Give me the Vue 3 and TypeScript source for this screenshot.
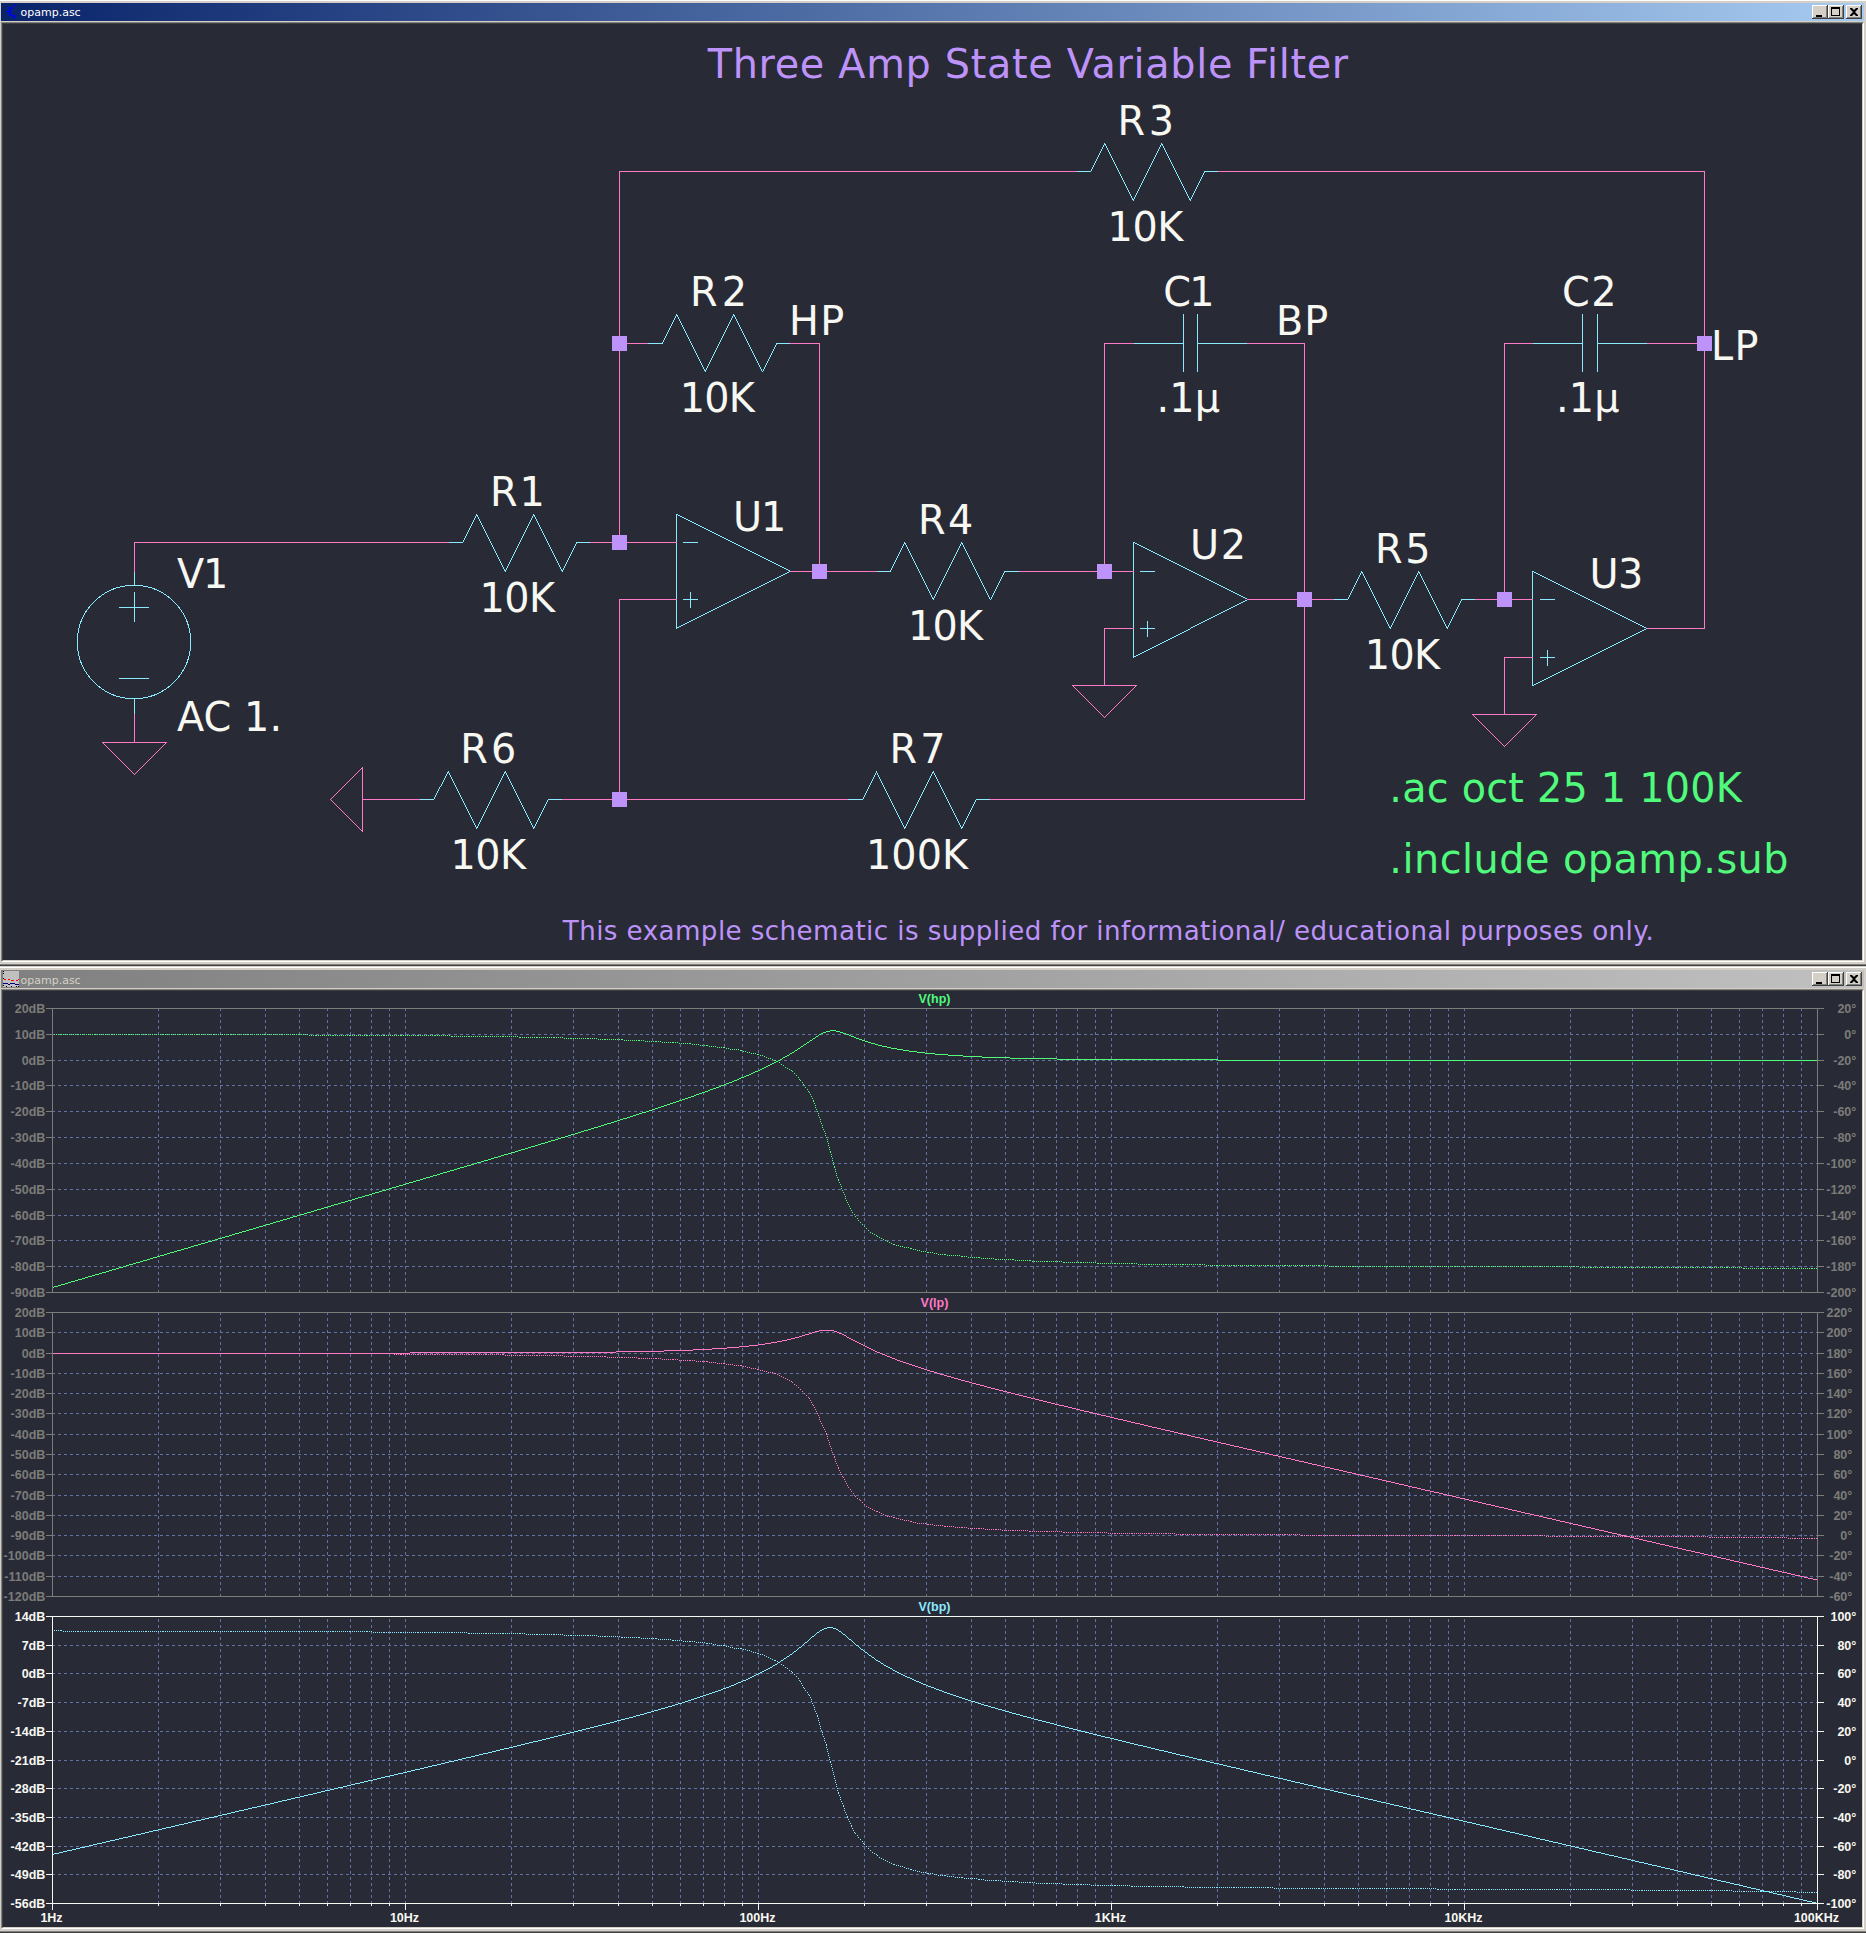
<script setup lang="ts">
type Pt = [number, number]

/* ---------- pixel line helpers ---------- */

// Walks a polyline pixel by pixel and returns a filled path; `on`/`off` give the dash pattern.
function trace(points: Pt[], on = 1, off = 0): string {
  const px: Pt[] = []
  for (let i = 0; i < points.length - 1; i++) {
    let [x, y] = points[i]
    const [x1, y1] = points[i + 1]
    const dx = Math.abs(x1 - x)
    const dy = -Math.abs(y1 - y)
    const sx = x < x1 ? 1 : -1
    const sy = y < y1 ? 1 : -1
    let err = dx + dy
    for (;;) {
      const last = px[px.length - 1]
      if (!last || last[0] !== x || last[1] !== y) px.push([x, y])
      if (x === x1 && y === y1) break
      const e2 = 2 * err
      if (e2 >= dy) { err += dy; x += sx }
      if (e2 <= dx) { err += dx; y += sy }
    }
  }
  let d = ''
  let i = 0
  while (i < px.length) {
    if (off && i % (on + off) >= on) { i++; continue }
    let j = i
    while (
      j + 1 < px.length && px[j + 1][1] === px[i][1] && px[j + 1][0] === px[j][0] + 1 &&
      (!off || (j + 1) % (on + off) < on) && (!off || (j + 1) % (on + off) !== 0)
    ) j++
    const w = j - i + 1
    d += `M${px[i][0]} ${px[i][1]}h${w}v1h-${w}z`
    i = j + 1
  }
  return d
}

/* ---------- schematic ---------- */

const gx = (n: number): number => Math.floor(619.38 + 28.55 * n)
const gy = (m: number): number => Math.floor(542.85 + 28.54 * m)
const grid = (pts: Pt[]): string => trace(pts.map(([n, m]) => [gx(n), gy(m)] as Pt))

const wires: Pt[][] = [
  [[0, 0], [0, -13], [16, -13]],
  [[21, -13], [38, -13], [38, 3], [36, 3]],
  [[0, -7], [1, -7]],
  [[6, -7], [7, -7], [7, 1]],
  [[6, 1], [9, 1]],
  [[14, 1], [18, 1]],
  [[17, 1], [17, -7], [18, -7]],
  [[22, -7], [24, -7], [24, 9]],
  [[22, 2], [25, 2]],
  [[30, 2], [32, 2]],
  [[31, 2], [31, -7], [32, -7]],
  [[36, -7], [38, -7]],
  [[32, 4], [31, 4], [31, 6]],
  [[18, 3], [17, 3], [17, 5]],
  [[2, 2], [0, 2], [0, 9]],
  [[-17, 1], [-17, 0], [-6, 0]],
  [[-1, 0], [2, 0]],
  [[-17, 6], [-17, 7]],
  [[-9, 9], [-7, 9]],
  [[-2, 9], [8, 9]],
  [[13, 9], [24, 9]],
]
const wirePath = wires.map(grid).join('')

const groundPath = ([[-17, 7], [17, 5], [31, 6]] as Pt[])
  .map(([n, m]) => {
    const x = gx(n)
    const y = gy(m)
    return trace([[x, y + 32], [x - 32, y], [x + 32, y], [x, y + 32]])
  })
  .join('') + trace([[gx(-9), gy(9) - 32], [gx(-9), gy(9) + 32], [gx(-9) - 32, gy(9)], [gx(-9), gy(9) - 32]])

const resistors: Pt[] = [[16, -13], [1, -7], [-6, 0], [9, 1], [25, 2], [-7, 9], [8, 9]]
const resistorPath = resistors
  .map(([n, m]) => grid([
    [n, m], [n + 0.5, m], [n + 1, m - 1], [n + 2, m + 1], [n + 3, m - 1],
    [n + 4, m + 1], [n + 4.5, m], [n + 5, m],
  ]))
  .join('')

const capPath = ([[18, -7], [32, -7]] as Pt[])
  .map(([n, m]) =>
    grid([[n, m], [n + 1.75, m]]) + grid([[n + 1.75, m - 1], [n + 1.75, m + 1]]) +
    grid([[n + 2.25, m - 1], [n + 2.25, m + 1]]) + grid([[n + 2.25, m], [n + 4, m]]))
  .join('')

const ampPath = ([[2, 1], [18, 2], [32, 3]] as Pt[])
  .map(([n, m]) => {
    const cx = gx(n + 0.5)
    const yp = gy(m + 1)
    const ym = gy(m - 1)
    return grid([[n, m - 2], [n, m + 2], [n + 4, m], [n, m - 2]]) +
      trace([[cx - 7, ym], [cx + 7, ym]]) + trace([[cx - 7, yp], [cx + 7, yp]]) +
      trace([[cx, yp - 7], [cx, yp + 8]])
  })
  .join('')

const vx = gx(-17)
const sourcePath =
  trace([[vx, 571], [vx, 585]]) + trace([[vx, 698], [vx, 713]]) +
  trace([[vx, 592], [vx, 621]]) + trace([[vx - 15, 607], [vx + 14, 607]]) +
  trace([[vx - 15, 678], [vx + 14, 678]])

const junctions: Pt[] = [[0, -7], [0, 0], [7, 1], [17, 1], [24, 2], [31, 2], [38, -7], [0, 9]]

interface Label { text: string; left: number; right: number; y: number; kind: 'part' | 'directive' | 'title' | 'note' }
const L = (text: string, left: number, right: number, y: number, kind: Label['kind'] = 'part'): Label =>
  ({ text, left, right, y, kind })

const labels: Label[] = [
  L('Three Amp State Variable Filter', 706.8, 1348.5, 78, 'title'),
  L('R3', 1121.5, 1171, 135), L('10K', 1111.5, 1184.5, 241),
  L('R2', 694, 743, 306), L('10K', 683.6, 756, 412), L('HP', 793, 843.6, 335),
  L('R1', 493.8, 541.7, 506), L('10K', 483.3, 556.3, 612), L('U1', 736, 783.3, 531),
  L('R4', 922, 971.3, 534), L('10K', 912, 984.3, 640),
  L('C1', 1165.3, 1211.6, 306), L('.1µ', 1160.5, 1220, 412), L('BP', 1280, 1327.6, 335),
  L('C2', 1564, 1612.5, 306), L('.1µ', 1560, 1619.5, 412), L('LP', 1714.8, 1757.8, 360),
  L('U2', 1193, 1242.2, 559), L('R5', 1379, 1427.5, 563), L('10K', 1368.7, 1441.2, 669),
  L('U3', 1592.3, 1640.2, 588), L('V1', 177.1, 225.4, 588), L('AC 1.', 177, 278.2, 731),
  L('R6', 464.2, 514.2, 763), L('10K', 454.5, 527.2, 869),
  L('R7', 893.5, 942.5, 763), L('100K', 869.8, 969.3, 869),
  L('.ac oct 25 1 100K', 1393.2, 1743, 802, 'directive'),
  L('.include opamp.sub', 1393.2, 1786.7, 873, 'directive'),
  L('This example schematic is supplied for informational/ educational purposes only.', 561.8, 1652, 940, 'note'),
]

const SQUEEZE = 0.97
const pen = document.createElement('canvas').getContext('2d')!
// Fits each label between its left and right ink edges by spreading the letters.
const placed = labels.map((l) => {
  const size = l.kind === 'note' ? 27 : 41
  pen.font = `${size}px "DejaVu Sans"`
  const m = pen.measureText(l.text)
  const ink = m.actualBoundingBoxRight + m.actualBoundingBoxLeft
  const spacing = ((l.right - l.left) / SQUEEZE - ink) / (l.text.length - 1)
  return { ...l, size, spacing, x: l.left + m.actualBoundingBoxLeft * SQUEEZE }
})

/* ---------- waveforms ---------- */

const X0 = 52
const X1 = 1817
const DECADE = (X1 - X0) / 5
const F0 = 1 / (2 * Math.PI * 1e4 * 1e-7)
const DAMP = 3 / 11
const GBW = 1e7
const DEG = 180 / Math.PI

interface Pane {
  id: string
  title: string
  color: string
  top: number
  bottom: number
  dbMax: number
  dbStep: number
  degMax: number
  degStep: number
  divs: number
  order: number
  phase0: number
  poles: number
  labelRight: number
  active: boolean
}

const panes: Pane[] = [
  { id: 'hp', title: 'V(hp)', color: '#50fa7b', top: 1008, bottom: 1292, dbMax: 20, dbStep: 10, degMax: 20, degStep: 20, divs: 11, order: 2, phase0: 0, poles: 3, labelRight: 1856, active: false },
  { id: 'lp', title: 'V(lp)', color: '#ff79c6', top: 1312, bottom: 1596, dbMax: 20, dbStep: 10, degMax: 220, degStep: 20, divs: 14, order: 0, phase0: 180, poles: 5, labelRight: 1852, active: false },
  { id: 'bp', title: 'V(bp)', color: '#8be9fd', top: 1616, bottom: 1903, dbMax: 14, dbStep: 7, degMax: 100, degStep: 20, divs: 10, order: 1, phase0: 90, poles: 4, labelRight: 1856, active: true },
]

const verticals: number[] = []
for (let d = 0; d < 5; d++)
  for (let k = 1; k < 10; k++) if (d || k > 1) verticals.push(Math.round(X0 + DECADE * (d + Math.log10(k))))

const charts = panes.map((p) => {
  const h = p.bottom - p.top
  const rows = Array.from({ length: p.divs + 1 }, (_, k) => ({
    y: Math.round(p.top + (h * k) / p.divs),
    db: `${p.dbMax - p.dbStep * k}dB`,
    deg: `${p.degMax - p.degStep * k}°`,
  }))
  const respond = (x: number): { db: number; deg: number } => {
    const f = 10 ** ((x - X0) / DECADE)
    const u = f / F0
    return {
      db: 20 * Math.log10(u ** p.order / Math.hypot(1 - u * u, DAMP * u)),
      deg: p.phase0 - DEG * Math.atan2(DAMP * u, 1 - u * u) - DEG * Math.atan((p.poles * f) / GBW),
    }
  }
  const magY = (x: number): number =>
    Math.min(p.bottom, Math.round(p.top + ((p.dbMax - respond(x).db) / (p.dbStep * p.divs)) * h))
  const degY = (x: number): number =>
    Math.round(p.top + ((p.degMax - respond(x).deg) / (p.degStep * p.divs)) * h)

  const mag: Pt[] = []
  for (let x = X0; x <= X1; x++) mag.push([x, magY(x)])

  // 25 sweep points per octave; the dot pattern restarts at each one.
  const step = (DECADE * Math.log10(2)) / 25
  let phase = ''
  let prev: Pt = [X0, degY(X0)]
  for (let x = X0 + step; x < X1 + step; x += step) {
    const cx = Math.min(x, X1)
    const next: Pt = [Math.round(cx), degY(cx)]
    phase += trace([prev, next], 1, 1)
    prev = next
  }

  const gridPath =
    rows.slice(1, -1).map((r) => trace([[X0, r.y], [X1, r.y]], 3, 3)).join('') +
    verticals.map((x) => trace([[x, p.bottom], [x, p.top]], 3, 3)).join('')
  let frame = trace([[X0 - 6, p.top], [X1 + 6, p.top]]) + trace([[X0 - 6, p.bottom], [X1 + 6, p.bottom]]) +
    trace([[X0, p.top], [X0, p.bottom]]) + trace([[X1, p.top], [X1, p.bottom]])
  for (const r of rows) frame += trace([[X0 - 6, r.y], [X0, r.y]]) + trace([[X1, r.y], [X1 + 6, r.y]])
  if (p.active) {
    for (const x of verticals) frame += trace([[x, p.bottom], [x, p.bottom + 2]])
    for (let d = 0; d <= 5; d++) {
      const x = Math.round(X0 + DECADE * d)
      frame += trace([[x, p.bottom], [x, p.bottom + 6]])
    }
  }
  return { ...p, rows, gridPath, frame, mag: trace(mag), phase }
})

const decades = ['1Hz', '10Hz', '100Hz', '1KHz', '10KHz', '100KHz'].map((text, d) => ({ text, x: X0 + DECADE * d - 0.5 }))
</script>

<template>
  <div class="desktop">
    <section class="window first">
      <header class="titlebar active">
        <svg class="icon" width="16" height="16" viewBox="0 0 16 16" shape-rendering="crispEdges">
          <path d="M1 7h4v1h-4zM4 3h2v9h-2zM6 4h1v1h-1zM7 3h1v1h-1zM8 2h1v1h-1zM9 1h1v1h-1zM10 0h1v1h-1zM6 10h1v1h-1zM7 11h1v1h-1zM8 11h2v3h-2zM7 13h3v1h-3zM10 14h1v1h-1z" fill="#00f" />
        </svg>
        <span class="caption">opamp.asc</span>
        <span class="buttons">
          <i class="btn"><svg width="16" height="14" viewBox="0 0 16 14"><path d="M4 10h6v2H4z" /></svg></i>
          <i class="btn"><svg width="16" height="14" viewBox="0 0 16 14"><path d="M3 2h9v9H3zM4 4v6h7V4z" fill-rule="evenodd" /></svg></i>
          <i class="btn gap"><svg width="16" height="14" viewBox="0 0 16 14"><path d="M4 3h2l2 2 2-2h2v1L9 7l3 3v1h-2L8 9l-2 2H4v-1l3-3-3-3z" /></svg></i>
        </span>
      </header>
      <div class="client"><div class="inner">
        <svg class="sheet" width="1859" height="936" viewBox="3 24 1859 936">
          <g shape-rendering="crispEdges">
            <path :d="resistorPath + capPath + ampPath + sourcePath" fill="#8be9fd" />
            <circle :cx="vx" cy="642" r="56.7" fill="none" stroke="#8be9fd" />
            <path :d="wirePath + groundPath" fill="#ff79c6" />
            <rect v-for="([n, m], i) in junctions" :key="i" :x="gx(n) - 7" :y="gy(m) - 7" width="15" height="15" fill="#bd93f9" />
          </g>
          <text
            v-for="(l, i) in placed" :key="i" :class="['label', l.kind]"
            :transform="`translate(${l.x} ${l.y}) scale(${SQUEEZE} 1)`"
            :font-size="l.size" :letter-spacing="l.spacing"
          >{{ l.text }}</text>
        </svg>
      </div></div>
    </section>

    <section class="window second">
      <header class="titlebar">
        <svg class="icon plot" width="16" height="16" viewBox="0 0 16 16" shape-rendering="crispEdges">
          <path d="M0 0h16v16H0z" fill="#c0c0c0" />
          <path d="M0 0h1v1H0zM0 2h1v1H0zM0 7h1v1H0zM0 14h1v1H0zM3 15h1v1H3zM8 15h1v1H8zM13 15h1v1h-1zM15 15h1v1h-1z" fill="#000" />
          <path d="M1 8h2v1H1zM5 8h2v1H5zM8 9h3v1H8zM13 9h2v1h-2zM15 8h1v1h-1z" fill="#f00" />
          <path d="M0 12h5v1H0zM5 13h2v1H5zM7 12h5v1H7zM12 13h4v1h-4z" fill="#000080" />
        </svg>
        <span class="caption">opamp.asc</span>
        <span class="buttons">
          <i class="btn"><svg width="16" height="14" viewBox="0 0 16 14"><path d="M4 10h6v2H4z" /></svg></i>
          <i class="btn"><svg width="16" height="14" viewBox="0 0 16 14"><path d="M3 2h9v9H3zM4 4v6h7V4z" fill-rule="evenodd" /></svg></i>
          <i class="btn gap"><svg width="16" height="14" viewBox="0 0 16 14"><path d="M4 3h2l2 2 2-2h2v1L9 7l3 3v1h-2L8 9l-2 2H4v-1l3-3-3-3z" /></svg></i>
        </span>
      </header>
      <div class="client"><div class="inner">
        <svg class="sheet" width="1859" height="936" viewBox="3 991 1859 936">
          <g v-for="c in charts" :key="c.id" :class="['pane', { on: c.active }]">
            <g shape-rendering="crispEdges">
              <path :d="c.gridPath" fill="#6272a4" />
              <path :d="c.mag" :fill="c.color" />
              <path :d="c.phase" :fill="c.color" />
              <path :d="c.frame" />
            </g>
            <text class="trace-name" x="934.5" :y="c.top - 5" :fill="c.color">{{ c.title }}</text>
            <g v-for="(r, i) in c.rows" :key="i" class="axis">
              <text x="45.3" :y="r.y + 5">{{ r.db }}</text>
              <text :x="c.labelRight + 0.3" :y="r.y + 5">{{ r.deg }}</text>
            </g>
          </g>
          <g class="pane on decades">
            <text v-for="d in decades" :key="d.text" :x="d.x" y="1922">{{ d.text }}</text>
          </g>
        </svg>
      </div></div>
    </section>
  </div>
</template>

<style>
body {
  margin: 0;
  background: #d4d0c8;
  overflow: hidden;
}
</style>

<style scoped>
.desktop {
  display: flex;
  flex-direction: column;
  width: 1866px;
  height: 1933px;
}
.window {
  box-sizing: border-box;
  display: flex;
  flex-direction: column;
  background: #d4d0c8;
  border-bottom: 1px solid #404040;
  box-shadow: inset 0 -1px 0 #808080;
  padding: 0 2px 3px 1px;
}
.first {
  height: 966px;
  border-top: 1px solid #fff;
  padding-top: 2px;
}
.second {
  height: 967px;
  border-top: 1px solid #d4d0c8;
  box-shadow: inset 0 1px 0 #fff, inset 0 -1px 0 #808080;
  padding-top: 3px;
}
.titlebar {
  display: flex;
  align-items: flex-start;
  height: 18px;
  margin-bottom: 1px;
  background: linear-gradient(to right, #808080, #c0c0c0);
  color: #d4d0c8;
}
.titlebar.active {
  background: linear-gradient(to right, #0a246a, #a6caf0);
  color: #fff;
}
.icon {
  flex: none;
  margin: 1px 0 0 4px;
}
.icon.plot {
  margin-left: 2px;
  margin-right: 2px;
}
.caption {
  flex: 1;
  font: 11px/17px "DejaVu Sans", sans-serif;
  padding-top: 2px;
  margin-left: -0.5px;
  height: 16px;
}
.active .caption {
  padding-top: 1px;
}
.buttons {
  display: flex;
  padding: 2px 2px 0 0;
}
.btn {
  display: block;
  width: 16px;
  height: 14px;
  background: #d4d0c8;
  box-shadow: inset -1px -1px #404040, inset 1px 1px #fff, inset -2px -2px #808080;
}
.btn svg { display: block; fill: #000; }
.btn.gap { margin-left: 2px; }
.client {
  border: 1px solid;
  border-color: #808080 #fff #fff #808080;
}
.inner {
  border: 1px solid;
  border-color: #404040 #d4d0c8 #d4d0c8 #404040;
  background: #282a36;
}
.sheet { display: block; }
.label { font-family: "DejaVu Sans", sans-serif; fill: #f8f8f2; white-space: pre; }
.label.title, .label.note { fill: #bd93f9; }
.label.directive { fill: #50fa7b; }
.pane { fill: #7c7c79; }
.pane.on { fill: #f8f8f2; }
.trace-name, .axis text, .decades text {
  font: bold 12.5px "Liberation Sans", Arial, sans-serif;
}
.axis text { text-anchor: end; }
.trace-name, .decades text { text-anchor: middle; }
</style>
